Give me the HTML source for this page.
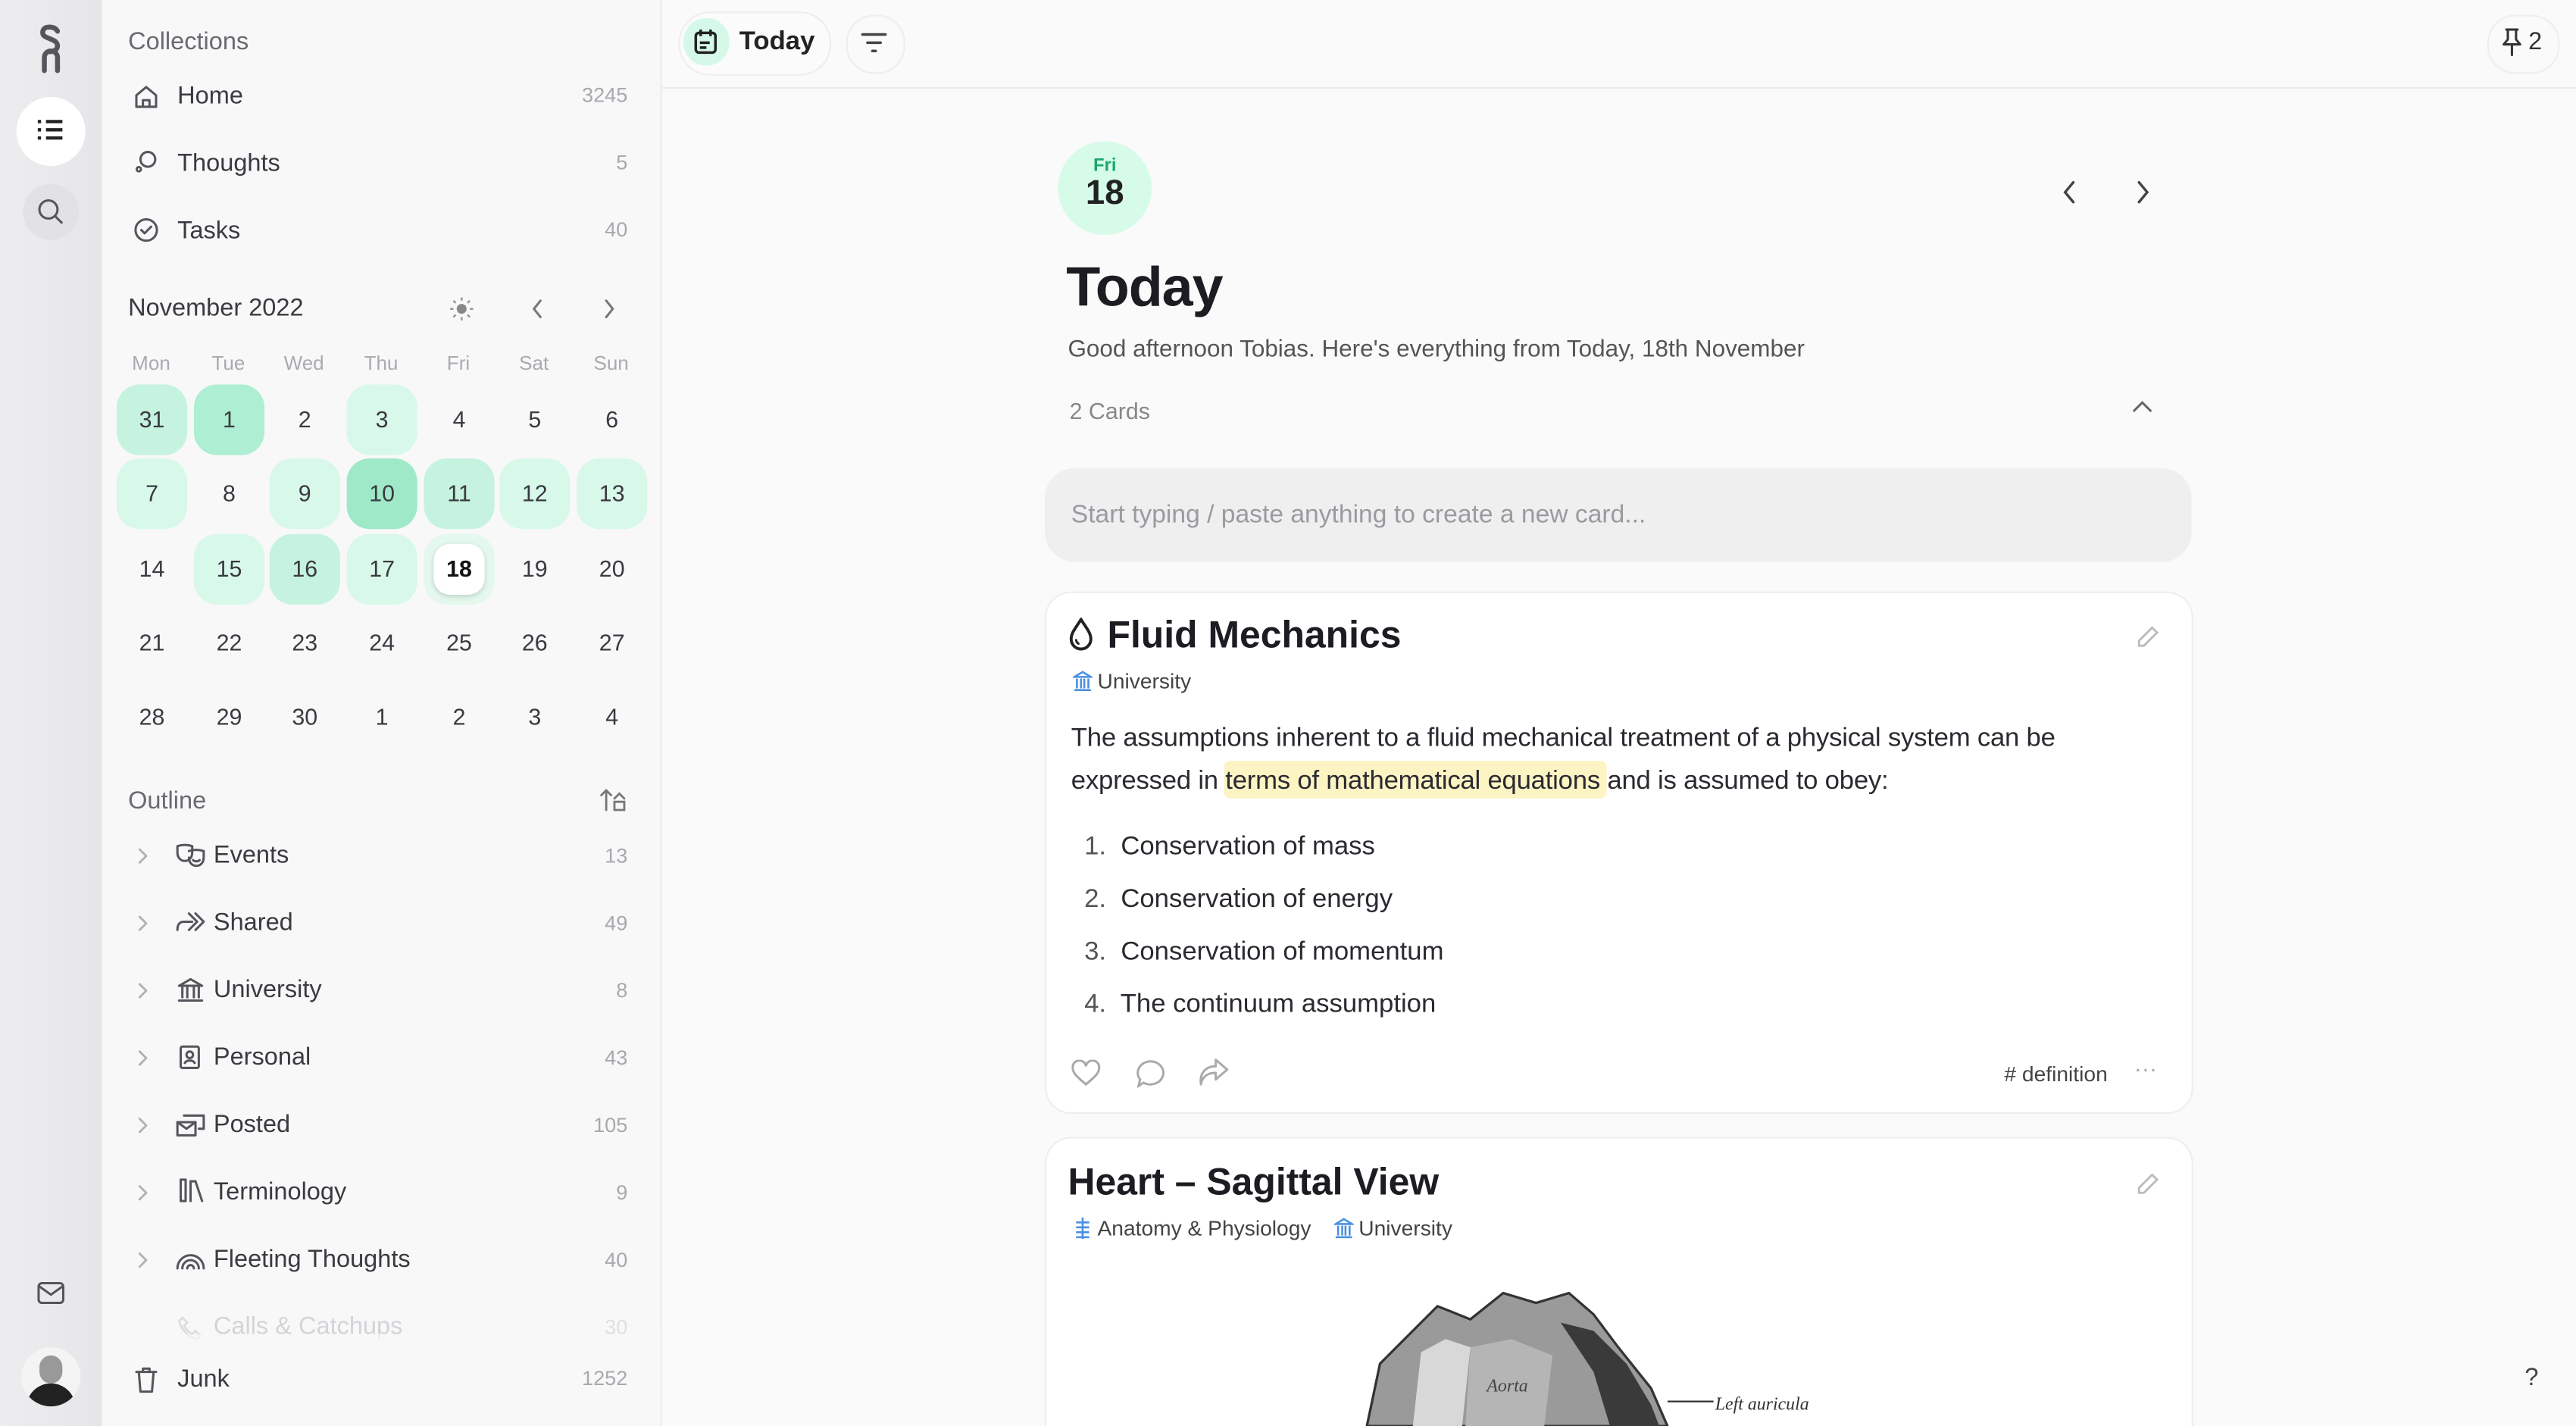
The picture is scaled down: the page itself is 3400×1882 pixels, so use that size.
<!DOCTYPE html>
<html><head><meta charset="utf-8"><style>
html,body{margin:0;padding:0;width:3400px;height:1881px;overflow:hidden;background:#fafafa;font-family:"Liberation Sans",sans-serif;}
#w{position:absolute;left:0;top:0;width:1568px;height:868px;transform:scale(2.16837);transform-origin:0 0;background:#fafafa;overflow:hidden}
.a{position:absolute}
.rail{left:0;top:0;width:62px;height:868px;background:linear-gradient(90deg,#ededef,#e6e6e9)}
.side{left:62px;top:0;width:340px;height:868px;background:#f8f8f9;border-right:1px solid #ececee}
.t{color:#3a3a40;font-size:15px}
.c{color:#a8a8ae;font-size:12.5px;text-align:right;width:60px}
.h{color:#6a6a70;font-size:15px}
.dow{color:#aaaab0;font-size:12px;width:46px;text-align:center}
.d{width:43px;height:43px;border-radius:14px;text-align:center;line-height:43px;font-size:14px;color:#3a3a40}
.g1{background:#d8f8ea}.g2{background:#c5f3df}.g3{background:#aeeed2}
.ico{stroke:#55555c;fill:none;stroke-width:1.4;stroke-linecap:round;stroke-linejoin:round}
.chev{fill:none;stroke:#b0b0b5;stroke-width:1.3;stroke-linecap:round;stroke-linejoin:round}
.card{background:#fff;border:1px solid #eeeef0;border-radius:16px}
.li{font-size:16px;color:#2a2a30}
</style></head><body><div id="w">
<div class="a rail"></div>
<svg class="a" style="left:22px;top:15px" width="18" height="30" viewBox="0 0 18 30"><path d="M13 4C12 2 10 1.5 8 1.5 5 1.5 4 3 4 5c0 4 9 3 9 8 0 2-2 3.5-5 3.5" fill="none" stroke="#55555c" stroke-width="3" stroke-linecap="round"/><path d="M5 28v-8a4 4 0 0 1 8 0v8" fill="none" stroke="#55555c" stroke-width="3" stroke-linecap="round"/></svg>
<div class="a" style="left:10px;top:59px;width:42px;height:42px;border-radius:21px;background:#fff"></div>
<svg class="a" style="left:22px;top:71px" width="18" height="18" viewBox="0 0 18 18"><g stroke="#222" stroke-width="2"><path d="M1 3h2M6 3h10M1 8h2M6 8h10M1 13h2M6 13h10"/></g></svg>
<div class="a" style="left:14px;top:112px;width:34px;height:34px;border-radius:17px;background:#e2e2e5"></div>
<svg class="a" style="left:22px;top:120px" width="18" height="18" viewBox="0 0 18 18"><circle cx="7.5" cy="7.5" r="5.5" class="ico"/><path d="M11.5 11.5l4 4" class="ico"/></svg>
<svg class="a" style="left:22px;top:779px" width="18" height="16" viewBox="0 0 18 16"><rect x="1.5" y="2" width="15" height="12" rx="2" class="ico"/><path d="M2 4l7 5 7-5" class="ico"/></svg>
<div class="a" style="left:13px;top:820px;width:36px;height:36px;border-radius:18px;overflow:hidden;background:#f4f4f4"><div style="position:absolute;left:11px;top:5px;width:14px;height:17px;border-radius:7px;background:#999"></div><div style="position:absolute;left:3px;top:22px;width:30px;height:20px;border-radius:15px 15px 0 0;background:#222"></div></div>

<div class="a side"></div>
<div class="a h" style="left:78px;top:17px">Collections</div>
<svg class="a" style="left:81px;top:51px" width="16" height="16" viewBox="0 0 16 16"><path class="ico" d="M2 7l6-5 6 5v7H2z M6 14v-4h4v4"/></svg>
<div class="a t" style="left:108px;top:50px">Home</div><div class="a c" style="left:322px;top:51px">3245</div>
<svg class="a" style="left:81px;top:91px" width="16" height="16" viewBox="0 0 16 16"><circle cx="9" cy="6" r="4.5" class="ico"/><circle cx="3.5" cy="12" r="1.3" class="ico"/></svg>
<div class="a t" style="left:108px;top:91px">Thoughts</div><div class="a c" style="left:322px;top:92px">5</div>
<svg class="a" style="left:81px;top:132px" width="16" height="16" viewBox="0 0 16 16"><circle cx="8" cy="8" r="6.5" class="ico"/><path class="ico" d="M5 8l2 2 4-4"/></svg>
<div class="a t" style="left:108px;top:132px">Tasks</div><div class="a c" style="left:322px;top:133px">40</div>

<div class="a" style="left:78px;top:179px;font-size:15px;color:#3a3a40">November 2022</div>
<svg class="a" style="left:273px;top:180px" width="16" height="16" viewBox="0 0 16 16"><circle cx="8" cy="8" r="3" fill="#888"/><path d="M8 1v2M8 13v2M1 8h2M13 8h2M3 3l1.4 1.4M11.6 11.6L13 13M3 13l1.4-1.4M11.6 4.4L13 3" stroke="#999" stroke-width="1.2"/></svg>
<svg class="a" style="left:322px;top:181px" width="10" height="14" viewBox="0 0 10 14"><path d="M7 2L3 7l4 5" fill="none" stroke="#777" stroke-width="1.4" stroke-linecap="round"/></svg>
<svg class="a" style="left:366px;top:181px" width="10" height="14" viewBox="0 0 10 14"><path d="M3 2l4 5-4 5" fill="none" stroke="#777" stroke-width="1.4" stroke-linecap="round"/></svg>
<div class="a dow" style="left:69px;top:214px">Mon</div><div class="a dow" style="left:116px;top:214px">Tue</div><div class="a dow" style="left:162px;top:214px">Wed</div><div class="a dow" style="left:209px;top:214px">Thu</div><div class="a dow" style="left:256px;top:214px">Fri</div><div class="a dow" style="left:302px;top:214px">Sat</div><div class="a dow" style="left:349px;top:214px">Sun</div>

<div class="a d g2" style="left:71px;top:234px">31</div><div class="a d g3" style="left:118px;top:234px">1</div><div class="a d" style="left:164px;top:234px">2</div><div class="a d g1" style="left:211px;top:234px">3</div><div class="a d" style="left:258px;top:234px">4</div><div class="a d" style="left:304px;top:234px">5</div><div class="a d" style="left:351px;top:234px">6</div>
<div class="a d g1" style="left:71px;top:279px">7</div><div class="a d" style="left:118px;top:279px">8</div><div class="a d g1" style="left:164px;top:279px">9</div><div class="a d" style="left:211px;top:279px;background:#9fe9c9">10</div><div class="a d g2" style="left:258px;top:279px">11</div><div class="a d g1" style="left:304px;top:279px">12</div><div class="a d g1" style="left:351px;top:279px">13</div>
<div class="a d" style="left:71px;top:325px">14</div><div class="a d g1" style="left:118px;top:325px">15</div><div class="a d g2" style="left:164px;top:325px">16</div><div class="a d g1" style="left:211px;top:325px">17</div><div class="a d" style="left:258px;top:325px;background:#e4f8ee"><div style="margin:6px;width:31px;height:31px;line-height:31px;border-radius:10px;background:#fff;font-weight:bold;color:#111;box-shadow:0 1px 3px rgba(0,0,0,.15)">18</div></div><div class="a d" style="left:304px;top:325px">19</div><div class="a d" style="left:351px;top:325px">20</div>
<div class="a d" style="left:71px;top:370px">21</div><div class="a d" style="left:118px;top:370px">22</div><div class="a d" style="left:164px;top:370px">23</div><div class="a d" style="left:211px;top:370px">24</div><div class="a d" style="left:258px;top:370px">25</div><div class="a d" style="left:304px;top:370px">26</div><div class="a d" style="left:351px;top:370px">27</div>
<div class="a d" style="left:71px;top:415px">28</div><div class="a d" style="left:118px;top:415px">29</div><div class="a d" style="left:164px;top:415px">30</div><div class="a d" style="left:211px;top:415px">1</div><div class="a d" style="left:258px;top:415px">2</div><div class="a d" style="left:304px;top:415px">3</div><div class="a d" style="left:351px;top:415px">4</div>

<div class="a h" style="left:78px;top:479px">Outline</div>
<svg class="a" style="left:364px;top:479px" width="18" height="15" viewBox="0 0 18 15"><path d="M5 14V2M2 5l3-3 3 3M10 7l3-3 3 3M10 9h6v5h-6z" fill="none" stroke="#777" stroke-width="1.3" stroke-linecap="round"/></svg>

<svg class="a" style="left:83px;top:515px" width="8" height="12" viewBox="0 0 8 12"><path class="chev" d="M2 2l4 4-4 4"/></svg><svg class="a" style="left:107px;top:513px" width="18" height="15" viewBox="0 0 18 15"><path class="ico" d="M1 2c3-1 6-1 9 0v4c0 3-2 5-4.5 5S1 9 1 6z M8 5c3-1 6-1 9 0v4c0 3-2 5-4.5 5S8 12 8 9"/><path class="ico" d="M10.5 10.5c1 1 3 1 4 0"/></svg><div class="a t" style="left:130px;top:512px">Events</div><div class="a c" style="left:322px;top:514px">13</div>
<svg class="a" style="left:83px;top:556px" width="8" height="12" viewBox="0 0 8 12"><path class="chev" d="M2 2l4 4-4 4"/></svg><svg class="a" style="left:107px;top:554px" width="18" height="15" viewBox="0 0 18 15"><path class="ico" d="M8 2l5 5-5 5M12 2l5 5-5 5M10 7H5c-3 0-4 2-4 5"/></svg><div class="a t" style="left:130px;top:553px">Shared</div><div class="a c" style="left:322px;top:555px">49</div>
<svg class="a" style="left:83px;top:597px" width="8" height="12" viewBox="0 0 8 12"><path class="chev" d="M2 2l4 4-4 4"/></svg><svg class="a" style="left:108px;top:595px" width="16" height="15" viewBox="0 0 16 15"><path class="ico" d="M1 5l7-4 7 4zM3 6v6M6 6v6M10 6v6M13 6v6M1 14h14"/></svg><div class="a t" style="left:130px;top:594px">University</div><div class="a c" style="left:322px;top:596px">8</div>
<svg class="a" style="left:83px;top:638px" width="8" height="12" viewBox="0 0 8 12"><path class="chev" d="M2 2l4 4-4 4"/></svg><svg class="a" style="left:108px;top:636px" width="16" height="15" viewBox="0 0 16 15"><rect x="2" y="1" width="11" height="13" rx="1" class="ico"/><circle cx="7.5" cy="6" r="2" class="ico"/><path class="ico" d="M4.5 11c1-2 5-2 6 0"/></svg><div class="a t" style="left:130px;top:635px">Personal</div><div class="a c" style="left:322px;top:637px">43</div>
<svg class="a" style="left:83px;top:679px" width="8" height="12" viewBox="0 0 8 12"><path class="chev" d="M2 2l4 4-4 4"/></svg><svg class="a" style="left:107px;top:677px" width="18" height="15" viewBox="0 0 18 15"><rect x="1" y="6" width="11" height="8" class="ico"/><path class="ico" d="M1 6l5.5 4 5.5-4M5 2h12v8h-3"/></svg><div class="a t" style="left:130px;top:676px">Posted</div><div class="a c" style="left:322px;top:678px">105</div>
<svg class="a" style="left:83px;top:720px" width="8" height="12" viewBox="0 0 8 12"><path class="chev" d="M2 2l4 4-4 4"/></svg><svg class="a" style="left:108px;top:717px" width="16" height="15" viewBox="0 0 16 15"><path class="ico" d="M2 1v13M5 1v13M2 1h3M2 14h3M8 2v12M8 2l3 0M11 2l4 12"/></svg><div class="a t" style="left:130px;top:717px">Terminology</div><div class="a c" style="left:322px;top:719px">9</div>
<svg class="a" style="left:83px;top:761px" width="8" height="12" viewBox="0 0 8 12"><path class="chev" d="M2 2l4 4-4 4"/></svg><svg class="a" style="left:107px;top:758px" width="18" height="15" viewBox="0 0 18 15"><path class="ico" d="M1 14a8 8 0 0 1 16 0M4 14a5 5 0 0 1 10 0M7 14a2 2 0 0 1 4 0"/></svg><div class="a t" style="left:130px;top:758px">Fleeting Thoughts</div><div class="a c" style="left:322px;top:760px">40</div>
<div class="a" style="left:130px;top:799px;color:#d4d4d8;font-size:15px">Calls &amp; Catchups</div><svg class="a" style="left:108px;top:800px" width="16" height="15" viewBox="0 0 16 15"><path d="M3 2l3 3-2 2c1 2 3 4 5 5l2-2 3 3-2 2C7 14 2 9 1 4z" fill="none" stroke="#ddd" stroke-width="1.3"/></svg><div class="a c" style="left:322px;top:801px;color:#e0e0e3">30</div>
<div class="a" style="left:62px;top:812px;width:340px;height:56px;background:linear-gradient(rgba(248,248,249,.6),#f8f8f9 20%)"></div>
<svg class="a" style="left:82px;top:832px" width="14" height="16" viewBox="0 0 14 16"><path class="ico" d="M1 3h12M5 3V1h4v2M2.5 3l1 12h7l1-12"/></svg>
<div class="a t" style="left:108px;top:831px">Junk</div><div class="a c" style="left:322px;top:832px">1252</div>

<!-- top bar -->
<div class="a" style="left:403px;top:53px;width:1165px;height:1px;background:#ececee"></div>
<div class="a" style="left:413px;top:7px;width:91px;height:37px;border-radius:19px;border:1px solid #eeeef0;background:#fbfbfb"></div>
<div class="a" style="left:416px;top:11px;width:28px;height:29px;border-radius:14px;background:#d5f8e8"></div>
<svg class="a" style="left:422px;top:17px" width="15" height="16" viewBox="0 0 15 16"><rect x="1.5" y="3" width="12" height="12" rx="2" fill="none" stroke="#222" stroke-width="1.6"/><path d="M4.5 1v4M10.5 1v4M4 9h6M4 12h4" stroke="#222" stroke-width="1.6"/></svg>
<div class="a" style="left:450px;top:17px;font-size:16px;font-weight:bold;color:#222">Today</div>
<div class="a" style="left:515px;top:9px;width:34px;height:34px;border-radius:17px;border:1px solid #eeeef0"></div>
<svg class="a" style="left:524px;top:19px" width="16" height="14" viewBox="0 0 16 14"><path d="M1 2h14M4 7h8M7 12h2" stroke="#444" stroke-width="1.6" stroke-linecap="round"/></svg>
<div class="a" style="left:1514px;top:9px;width:42px;height:34px;border-radius:17px;border:1px solid #eeeef0"></div>
<svg class="a" style="left:1522px;top:17px" width="14" height="18" viewBox="0 0 14 18"><path d="M3 1h8M4.5 1v6L2 10h10L9.5 7V1M7 10v7" fill="none" stroke="#333" stroke-width="1.4" stroke-linejoin="round"/></svg>
<div class="a" style="left:1539px;top:17px;font-size:15px;color:#333">2</div>

<!-- header -->
<div class="a" style="left:644px;top:86px;width:57px;height:57px;border-radius:29px;background:#d7fbe9"></div>
<div class="a" style="left:644px;top:95px;width:57px;text-align:center;font-size:11px;font-weight:bold;color:#1aa76a">Fri</div>
<div class="a" style="left:644px;top:106px;width:57px;text-align:center;font-size:21px;font-weight:bold;color:#222">18</div>
<svg class="a" style="left:1254px;top:109px" width="12" height="16" viewBox="0 0 12 16"><path d="M8 2L3 8l5 6" fill="none" stroke="#444" stroke-width="1.6" stroke-linecap="round"/></svg>
<svg class="a" style="left:1298px;top:109px" width="12" height="16" viewBox="0 0 12 16"><path d="M4 2l5 6-5 6" fill="none" stroke="#444" stroke-width="1.6" stroke-linecap="round"/></svg>
<div class="a" style="left:649px;top:156px;font-size:34px;font-weight:bold;color:#1c1c22;letter-spacing:-.5px">Today</div>
<div class="a" style="left:650px;top:205px;font-size:14.5px;color:#555">Good afternoon Tobias. Here's everything from Today, 18th November</div>
<div class="a" style="left:651px;top:242px;font-size:14px;color:#888">2 Cards</div>
<svg class="a" style="left:1297px;top:242px" width="14" height="10" viewBox="0 0 14 10"><path d="M2 8l5-5 5 5" fill="none" stroke="#666" stroke-width="1.4" stroke-linecap="round"/></svg>
<div class="a" style="left:636px;top:285px;width:698px;height:57px;border-radius:18px;background:#efeff0"></div>
<div class="a" style="left:652px;top:305px;font-size:15.5px;color:#9a9aa0">Start typing / paste anything to create a new card...</div>

<!-- card 1 -->
<div class="a card" style="left:636px;top:360px;width:697px;height:316px"></div>
<svg class="a" style="left:650px;top:376px" width="16" height="20" viewBox="0 0 16 20"><path d="M8 1C5 6 2 9 2 13a6 6 0 0 0 12 0c0-4-3-7-6-12z" fill="none" stroke="#222" stroke-width="1.8"/><path d="M5 13a3 3 0 0 0 2 3" fill="none" stroke="#222" stroke-width="1.4"/></svg>
<div class="a" style="left:674px;top:373px;font-size:23px;font-weight:bold;color:#1c1c22">Fluid Mechanics</div>
<svg class="a" style="left:1299px;top:380px" width="16" height="16" viewBox="0 0 16 16"><path d="M11 2l3 3-8 8H3v-3z" fill="none" stroke="#bbb" stroke-width="1.3"/></svg>
<svg class="a" style="left:653px;top:408px" width="12" height="13" viewBox="0 0 12 13"><path d="M1 4l5-3 5 3zM2.5 5v6M5 5v6M7 5v6M9.5 5v6M1 12h10" fill="none" stroke="#4a90e2" stroke-width="1.2"/></svg>
<div class="a" style="left:668px;top:407px;font-size:13px;color:#444">University</div>
<div class="a" style="left:745px;top:463px;width:233px;height:23px;background:#fdf4c4;border-radius:4px"></div>
<div class="a" style="left:652px;top:437px;width:660px;font-size:16px;line-height:26px;color:#2a2a30;letter-spacing:-.1px">The assumptions inherent to a fluid mechanical treatment of a physical system can be expressed in terms of mathematical equations and is assumed to obey:</div>
<div class="a li" style="left:660px;top:507px"><span style="color:#555">1.</span>&nbsp; Conservation of mass</div>
<div class="a li" style="left:660px;top:539px"><span style="color:#555">2.</span>&nbsp; Conservation of energy</div>
<div class="a li" style="left:660px;top:571px"><span style="color:#555">3.</span>&nbsp; Conservation of momentum</div>
<div class="a li" style="left:660px;top:603px"><span style="color:#555">4.</span>&nbsp; The continuum assumption</div>
<svg class="a" style="left:652px;top:645px" width="18" height="17" viewBox="0 0 18 17"><path d="M9 15C3 10 1 8 1 5a4 4 0 0 1 8-1 4 4 0 0 1 8 1c0 3-2 5-8 10z" fill="none" stroke="#aaa" stroke-width="1.4"/></svg>
<svg class="a" style="left:691px;top:645px" width="18" height="17" viewBox="0 0 18 17"><path d="M9 1a8 7 0 1 1-4 13L2 16l1-4A8 7 0 0 1 9 1z" fill="none" stroke="#aaa" stroke-width="1.4"/></svg>
<svg class="a" style="left:729px;top:644px" width="19" height="18" viewBox="0 0 19 18"><path d="M11 1l7 6-7 6V9C6 9 3 11 2 16 1 9 5 5 11 5z" fill="none" stroke="#aaa" stroke-width="1.4" stroke-linejoin="round"/></svg>
<div class="a" style="left:1220px;top:646px;font-size:13px;color:#444"># definition</div>
<div class="a" style="left:1299px;top:642px;font-size:14px;color:#aaa">···</div>

<!-- card 2 -->
<div class="a card" style="left:636px;top:692px;width:697px;height:200px"></div>
<div class="a" style="left:650px;top:706px;font-size:23px;font-weight:bold;color:#1c1c22">Heart – Sagittal View</div>
<svg class="a" style="left:1299px;top:713px" width="16" height="16" viewBox="0 0 16 16"><path d="M11 2l3 3-8 8H3v-3z" fill="none" stroke="#bbb" stroke-width="1.3"/></svg>
<svg class="a" style="left:653px;top:741px" width="12" height="13" viewBox="0 0 12 13"><path d="M6 0v13M2 3h8M2 6h8M2 9h8M2 12h8" fill="none" stroke="#4a90e2" stroke-width="1.2"/></svg>
<div class="a" style="left:668px;top:740px;font-size:13px;color:#444">Anatomy &amp; Physiology</div>
<svg class="a" style="left:812px;top:741px" width="12" height="13" viewBox="0 0 12 13"><path d="M1 4l5-3 5 3zM2.5 5v6M5 5v6M7 5v6M9.5 5v6M1 12h10" fill="none" stroke="#4a90e2" stroke-width="1.2"/></svg>
<div class="a" style="left:827px;top:740px;font-size:13px;color:#444">University</div>
<svg class="a" style="left:820px;top:785px" width="320" height="83" viewBox="0 0 320 83"><path d="M12 83L20 45 40 25 55 10 75 18 95 2 115 8 135 2 150 15 165 35 185 60 195 83z" fill="#9a9a9a" stroke="#333" stroke-width="1.5"/><path d="M40 83L45 38 60 30 75 35 70 83z" fill="#d8d8d8"/><path d="M72 83L75 35 100 30 125 40 120 83z" fill="#b5b5b5"/><path d="M130 20 150 25 170 45 185 70 190 83 160 83 150 50z" fill="#3a3a3a"/><path d="M195 68h28" stroke="#333"/><text x="224" y="73" font-family="Liberation Serif" font-style="italic" font-size="11" fill="#333">Left auricula</text><text x="85" y="62" font-family="Liberation Serif" font-style="italic" font-size="11" fill="#444">Aorta</text></svg>
<div class="a" style="left:1528px;top:826px;width:26px;height:26px;border-radius:13px;text-align:center;line-height:26px;font-size:15px;color:#444">?</div>
</div></body></html>
